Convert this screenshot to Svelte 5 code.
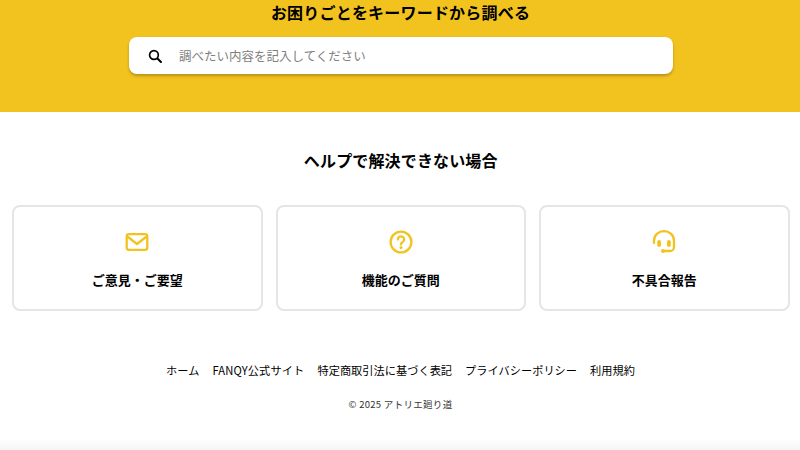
<script>
  const links = ['ホーム', 'FANQY公式サイト', '特定商取引法に基づく表記', 'プライバシーポリシー', '利用規約'];
</script>

<div class="page">
  <section class="hero">
    <h1>お困りごとをキーワードから調べる</h1>
    <div class="search">
      <svg class="search-icon" viewBox="0 0 16 16" width="14" height="14" aria-hidden="true">
        <circle cx="6.800" cy="6.800" r="5" fill="none" stroke="#000" stroke-width="1.900" />
        <path d="M10.800 10.800 14.800 14.800" fill="none" stroke="#000" stroke-width="2.300" stroke-linecap="round" />
      </svg>
      <span class="placeholder">調べたい内容を記入してください</span>
    </div>
  </section>

  <section class="help">
    <h2>ヘルプで解決できない場合</h2>
    <div class="cards">
      <div class="card">
        <svg viewBox="0 0 24 24" width="24" height="24" aria-hidden="true">
          <rect x="1.700" y="4.200" width="20.600" height="15.600" rx="2.200" class="stroke" />
          <path d="M3 7l9 7 9-7" class="stroke" />
        </svg>
        <span>ご意見・ご要望</span>
      </div>
      <div class="card">
        <svg viewBox="0 0 24 24" width="24" height="24" aria-hidden="true">
          <circle cx="12" cy="12" r="10.400" class="stroke" />
          <path d="M8.800 9.500a3.200 3.100 0 1 1 4.900 2.600c-1.100.7-1.700 1.300-1.700 2.300" class="stroke" />
          <circle cx="12" cy="17.600" r="1.500" class="fill" />
        </svg>
        <span>機能のご質問</span>
      </div>
      <div class="card">
        <svg viewBox="0 0 24 24" width="24" height="24" aria-hidden="true">
          <path d="M2 13v-2.500a10 9.300 0 0 1 20 0V17c0 2.500-2 4-4 4h-7" class="stroke" />
          <rect x="5.200" y="10" width="3.800" height="7" rx="1.900" class="fill" />
          <rect x="15" y="10" width="3.800" height="7" rx="1.900" class="fill" />
          <circle cx="11" cy="21" r="2" class="fill" />
        </svg>
        <span>不具合報告</span>
      </div>
    </div>
  </section>

  <footer>
    <nav>
      {#each links as link}
        <span>{link}</span>
      {/each}
    </nav>
    <p>© 2025 アトリエ廻り道</p>
  </footer>
</div>

<style>
  :global(body) {
    margin: 0;
    background: #fff;
  }

  .page {
    width: 800px;
    height: 450px;
    overflow: hidden;
    position: relative;
    font-family: "Noto Sans CJK JP", "Noto Sans", sans-serif;
    color: #000;
    background: #fff;
  }

  .hero {
    height: 112px;
    box-sizing: border-box;
    padding-left: 1px;
    background: #f2c31f;
    display: flex;
    flex-direction: column;
    align-items: center;
  }

  h1 {
    margin: 0;
    height: 37px;
    font-size: 16px;
    line-height: 24px;
    font-weight: 700;
    letter-spacing: 0.2px;
  }

  .search {
    width: 544px;
    height: 37px;
    margin-left: 1px;
    box-sizing: border-box;
    padding-left: 19px;
    display: flex;
    align-items: center;
    gap: 17px;
    background: #fff;
    border-radius: 8px;
    box-shadow: 0 2px 3px rgba(0, 0, 0, 0.25);
  }

  .placeholder {
    font-size: 12.500px;
    line-height: 18px;
    color: #808080;
  }

  .help {
    padding: 36px 10.500px 0 12px;
  }

  h2 {
    margin: 0 0 33px;
    text-align: center;
    font-size: 16px;
    line-height: 24px;
    font-weight: 700;
    letter-spacing: 0.15px;
  }

  .cards {
    display: grid;
    grid-template-columns: repeat(3, 1fr);
    gap: 13px;
  }

  .card {
    height: 106px;
    box-sizing: border-box;
    border: 2px solid #e5e5e5;
    border-radius: 8px;
    display: flex;
    flex-direction: column;
    align-items: center;
    padding-top: 23px;
    gap: 16px;
  }

  .card span {
    font-size: 13px;
    line-height: 20px;
    font-weight: 700;
  }

  .stroke {
    fill: none;
    stroke: #f2c31f;
    stroke-width: 2.300;
    stroke-linecap: round;
    stroke-linejoin: round;
  }

  .fill {
    fill: #f2c31f;
  }

  footer {
    padding: 50px 0 0 1px;
    text-align: center;
  }

  nav {
    display: flex;
    justify-content: center;
    gap: 13px;
    font-size: 11.200px;
    line-height: 18px;
    letter-spacing: 0.03px;
  }

  nav span:nth-child(2) {
    letter-spacing: 0.15px;
  }

  footer p {
    margin: 17px 0 0;
    font-size: 9.500px;
    line-height: 16px;
    letter-spacing: 0.3px;
    color: #333;
  }

  .page::after {
    content: "";
    position: absolute;
    left: 0;
    right: 0;
    bottom: 0;
    height: 12px;
    background: linear-gradient(rgba(240, 240, 240, 0), #f5f5f5);
  }
</style>
